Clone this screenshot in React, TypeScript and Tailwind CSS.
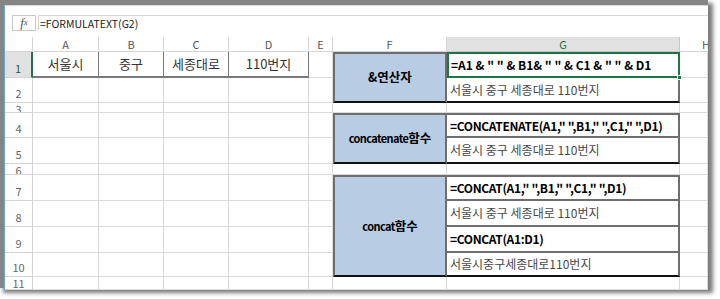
import type { ReactNode } from "react";

const KR = "font-['Noto_Sans_CJK_KR',sans-serif]";

function Hdr({ label, sel }: { label: string; sel?: boolean }) {
  return (
    <div
      className={
        sel
          ? "flex items-center justify-center border-r border-b border-[#c6c6c6] bg-[#e1e1e1] text-[11px] text-[#217346]"
          : "flex items-center justify-center border-r border-b border-[#d4d4d4] text-[11px] text-[#555]"
      }
    >
      {label}
    </div>
  );
}

function RowNum({ n, sel, tiny }: { n: number; sel?: boolean; tiny?: boolean }) {
  if (tiny) {
    return (
      <div className="flex items-start justify-center overflow-hidden border-r border-b border-[#d4d4d4] pt-[1px] text-[11px] leading-none text-[#666]">
        {n}
      </div>
    );
  }
  return (
    <div
      className={
        sel
          ? "flex items-end justify-center border-r-2 border-b border-r-[#217346] border-b-[#d4d4d4] bg-[#e1e1e1] pb-[3px] text-[11px] leading-none text-[#1d5c38]"
          : "flex items-end justify-center border-r border-b border-[#d4d4d4] pb-[3px] text-[11px] leading-none text-[#666]"
      }
    >
      {n}
    </div>
  );
}

function Blank() {
  return <div className="border-r border-b border-[#dadada]" />;
}

function Blanks({ n }: { n: number }) {
  return (
    <>
      {Array.from({ length: n }).map((_, i) => (
        <Blank key={i} />
      ))}
    </>
  );
}

function AddrCell({ children }: { children: ReactNode }) {
  return (
    <div className="flex items-center justify-center border-r border-b-2 border-[#7a7a7a] text-[13px] text-[#333]">
      {children}
    </div>
  );
}

function Formula({ children, top }: { children: ReactNode; top?: boolean }) {
  return (
    <div
      className={
        top
          ? "flex items-center whitespace-nowrap border-t-2 border-r-2 border-b-2 border-[#6e6e6e] pl-[3px] text-[12px] font-bold tracking-[-0.35px] text-black"
          : "flex items-center whitespace-nowrap border-r-2 border-b-2 border-[#6e6e6e] pl-[3px] text-[12px] font-bold tracking-[-0.35px] text-black"
      }
    >
      {children}
    </div>
  );
}

function Result({ children, last }: { children: ReactNode; last?: boolean }) {
  return (
    <div
      className={
        last
          ? "flex items-center whitespace-nowrap border-r-2 border-b-2 border-r-[#6e6e6e] border-b-[#111] pl-[3px] text-[12px] text-[#484848]"
          : "flex items-center whitespace-nowrap border-r-2 border-b-2 border-[#6e6e6e] pl-[3px] text-[12px] text-[#484848]"
      }
    >
      {children}
    </div>
  );
}

function Label({ span, children }: { span: "2" | "4"; children: ReactNode }) {
  return (
    <div
      className={
        span === "2"
          ? "row-span-2 flex items-center justify-center whitespace-nowrap border-2 border-[#6e6e6e] border-b-[#111] bg-[#b8cce4] text-[12.5px] font-bold text-black"
          : "row-span-4 flex items-center justify-center whitespace-nowrap border-2 border-[#6e6e6e] border-b-[#111] bg-[#b8cce4] text-[12.5px] font-bold text-black"
      }
    >
      {children}
    </div>
  );
}

export default function App() {
  const addr = ["서울시", "중구", "세종대로", "110번지"];
  return (
    <div className={`h-[299px] w-[720px] overflow-hidden bg-white ${KR}`}>
      <div className="flex h-[288px] w-[708px] flex-col bg-[#858585] pt-[5px] pl-[4px] shadow-[4px_4px_4px_1px_#7c7c7c]">
        <div className="flex flex-1 flex-col border-l border-t border-l-[#6aa6e0] border-t-[#d8d8d8] bg-white">
          {/* formula bar */}
          <div className="flex h-[31px] items-start pt-[9px] pl-[7px]">
            <div className="flex h-[16px] w-[24px] items-center justify-center border border-[#c8c8c8] font-['Liberation_Serif',serif] text-[13px] italic text-[#555]">
              f<span className="text-[9px]">x</span>
            </div>
            <div className="ml-[2px] flex h-[16px] flex-1 items-center border-l border-t border-[#d6d6d6] pl-[1px] text-[10.5px] text-[#222]">
              =FORMULATEXT(G2)
            </div>
          </div>

          {/* sheet */}
          <div className="grid flex-1 grid-cols-[28px_66px_65px_65px_80px_24px_114px_233px_28px] grid-rows-[15px_26px_25px_10px_25px_26px_11px_26px_26px_26px_24px_1fr] overflow-hidden">
            {/* header */}
            <div className="border-r border-b border-[#d4d4d4]" />
            <Hdr label="A" />
            <Hdr label="B" />
            <Hdr label="C" />
            <Hdr label="D" />
            <Hdr label="E" />
            <Hdr label="F" />
            <Hdr label="G" sel />
            <div className="flex items-center justify-end overflow-hidden border-b border-[#d4d4d4] text-[11px] text-[#555]">
              <span className="-mr-[2px]">H</span>
            </div>

            {/* row 1 */}
            <RowNum n={1} sel />
            {addr.map((a) => (
              <AddrCell key={a}>{a}</AddrCell>
            ))}
            <Blank />
            <Label span="2">&amp;연산자</Label>
            <div className="relative flex items-center whitespace-nowrap border-2 border-[#217346] pl-[2px] text-[12px] font-bold text-black">
              =A1 &amp; " " &amp; B1&amp; " " &amp; C1 &amp; " " &amp; D1
              <span className="absolute -right-[4px] -bottom-[4px] h-[5px] w-[5px] border border-white bg-[#217346]" />
            </div>
            <Blank />

            {/* row 2 */}
            <RowNum n={2} />
            <Blanks n={5} />
            <Result last>서울시 중구 세종대로 110번지</Result>
            <Blank />

            {/* row 3 */}
            <RowNum n={3} tiny />
            <Blanks n={8} />

            {/* row 4 */}
            <RowNum n={4} />
            <Blanks n={5} />
            <Label span="2">
              <span className="text-[11px] tracking-[-0.6px]">concatenate</span>함수
            </Label>
            <Formula top>=CONCATENATE(A1," ",B1," ",C1," ",D1)</Formula>
            <Blank />

            {/* row 5 */}
            <RowNum n={5} />
            <Blanks n={5} />
            <Result last>서울시 중구 세종대로 110번지</Result>
            <Blank />

            {/* row 6 */}
            <RowNum n={6} tiny />
            <Blanks n={8} />

            {/* row 7 */}
            <RowNum n={7} />
            <Blanks n={5} />
            <Label span="4">
              <span className="text-[11px] tracking-[-0.6px]">concat</span>함수
            </Label>
            <Formula top>=CONCAT(A1," ",B1," ",C1," ",D1)</Formula>
            <Blank />

            {/* row 8 */}
            <RowNum n={8} />
            <Blanks n={5} />
            <Result>서울시 중구 세종대로 110번지</Result>
            <Blank />

            {/* row 9 */}
            <RowNum n={9} />
            <Blanks n={5} />
            <Formula>=CONCAT(A1:D1)</Formula>
            <Blank />

            {/* row 10 */}
            <RowNum n={10} />
            <Blanks n={5} />
            <Result last>서울시중구세종대로110번지</Result>
            <Blank />

            {/* row 11 */}
            <RowNum n={11} tiny />
            <Blanks n={8} />
          </div>
        </div>
      </div>
    </div>
  );
}
